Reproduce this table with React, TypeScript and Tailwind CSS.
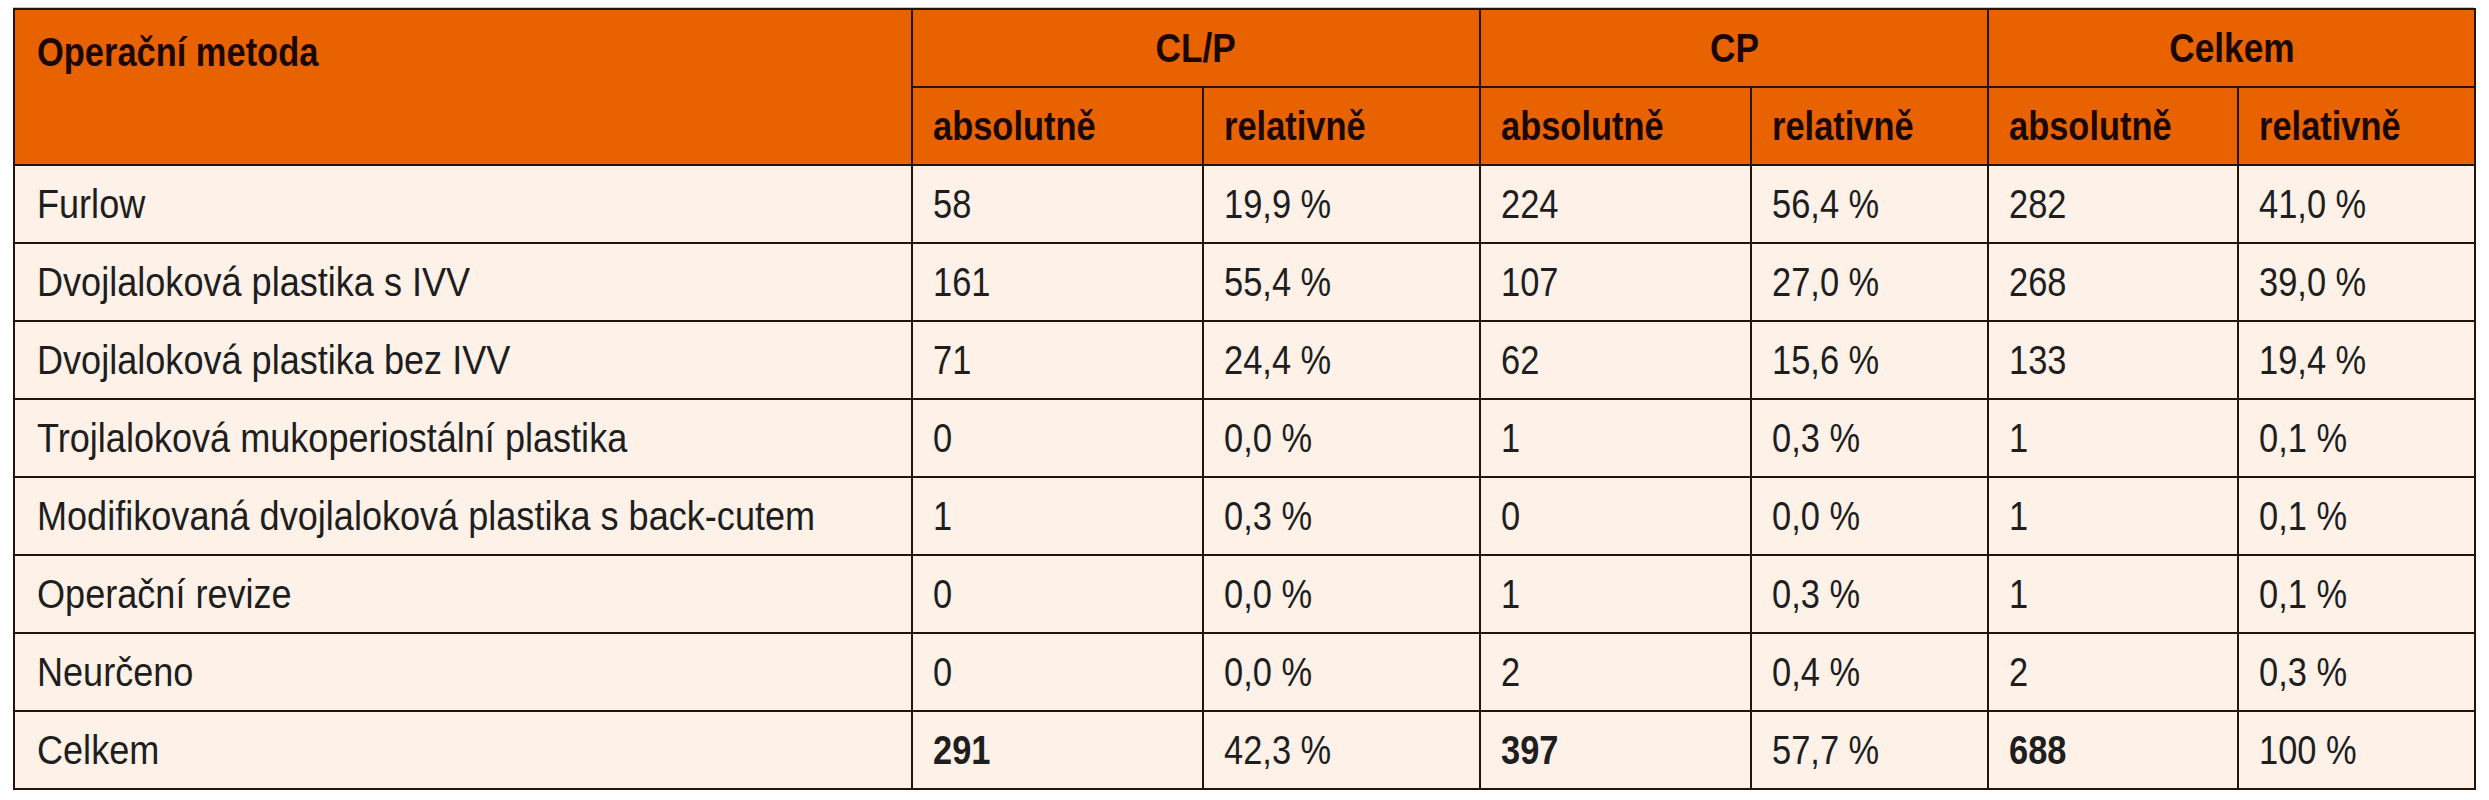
import React from "react";

const rows: [string, string, string, string, string, string, string][] = [
  ["Furlow", "58", "19,9 %", "224", "56,4 %", "282", "41,0 %"],
  ["Dvojlaloková plastika s IVV", "161", "55,4 %", "107", "27,0 %", "268", "39,0 %"],
  ["Dvojlaloková plastika bez IVV", "71", "24,4 %", "62", "15,6 %", "133", "19,4 %"],
  ["Trojlaloková mukoperiostální plastika", "0", "0,0 %", "1", "0,3 %", "1", "0,1 %"],
  ["Modifikovaná dvojlaloková plastika s back-cutem", "1", "0,3 %", "0", "0,0 %", "1", "0,1 %"],
  ["Operační revize", "0", "0,0 %", "1", "0,3 %", "1", "0,1 %"],
  ["Neurčeno", "0", "0,0 %", "2", "0,4 %", "2", "0,3 %"],
];

const font = {
  fontFamily: '"Liberation Sans", Arial, sans-serif',
};

function L({ children, bold }: { children: React.ReactNode; bold?: boolean }) {
  return (
    <span className={`inline-block whitespace-nowrap origin-left scale-x-[0.84] ${bold ? "font-bold" : "font-normal"}`}>
      {children}
    </span>
  );
}

function W({ children }: { children: React.ReactNode }) {
  return <span className="inline-block whitespace-nowrap origin-left scale-x-[0.88] font-normal">{children}</span>;
}

function C({ children }: { children: React.ReactNode }) {
  return <span className="inline-block whitespace-nowrap origin-center scale-x-[0.86] font-bold">{children}</span>;
}

const cell = "border-2 border-[#24140a]";

export default function App() {
  return (
    <div className="bg-white w-[2489px] h-[800px] pt-[7px]" style={font}>
      <div className="ml-[13px] w-[2461px] border-t border-[#c8c8c8]">
        <table className="table-fixed border-collapse w-[2461px] text-[#1e1e1e]">
          <colgroup>
            <col className="w-[898px]" />
            <col className="w-[291px]" />
            <col className="w-[277px]" />
            <col className="w-[271px]" />
            <col className="w-[237px]" />
            <col className="w-[250px]" />
            <col className="w-[237px]" />
          </colgroup>
          <thead className="bg-[#e96200] text-[#1a0800] text-[41px] leading-none">
            <tr className="h-[78px]">
              <th rowSpan={2} className={`${cell} text-left align-top pl-[22px] pt-[22px]`}>
                <L bold>Operační metoda</L>
              </th>
              <th colSpan={2} className={`${cell} text-center`}>
                <C>CL/P</C>
              </th>
              <th colSpan={2} className={`${cell} text-center`}>
                <C>CP</C>
              </th>
              <th colSpan={2} className={`${cell} text-center`}>
                <C>Celkem</C>
              </th>
            </tr>
            <tr className="h-[78px]">
              {["absolutně", "relativně", "absolutně", "relativně", "absolutně", "relativně"].map((t, i) => (
                <th key={i} className={`${cell} text-left pl-[20px]`}>
                  <L bold>{t}</L>
                </th>
              ))}
            </tr>
          </thead>
          <tbody className="bg-[#fdf1e8] text-[41px] leading-none">
            {rows.map((r, i) => (
              <tr key={i} className="h-[78px]">
                {r.map((c, j) => (
                  <td key={j} className={`${cell} ${j === 0 ? "pl-[22px]" : "pl-[20px]"}`}>
                    {j === 0 ? <W>{c}</W> : <L>{c}</L>}
                  </td>
                ))}
              </tr>
            ))}
            <tr className="h-[78px]">
              <td className={`${cell} pl-[22px]`}>
                <W>Celkem</W>
              </td>
              <td className={`${cell} pl-[20px]`}>
                <L bold>291</L>
              </td>
              <td className={`${cell} pl-[20px]`}>
                <L>42,3 %</L>
              </td>
              <td className={`${cell} pl-[20px]`}>
                <L bold>397</L>
              </td>
              <td className={`${cell} pl-[20px]`}>
                <L>57,7 %</L>
              </td>
              <td className={`${cell} pl-[20px]`}>
                <L bold>688</L>
              </td>
              <td className={`${cell} pl-[20px]`}>
                <L>100 %</L>
              </td>
            </tr>
          </tbody>
        </table>
      </div>
    </div>
  );
}
